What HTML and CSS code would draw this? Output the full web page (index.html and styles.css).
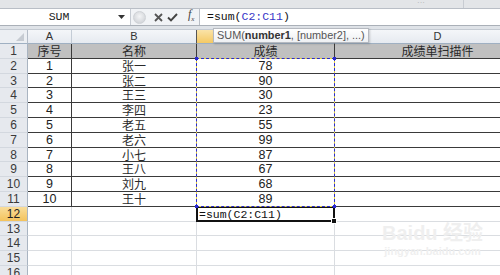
FILE: index.html
```html
<!DOCTYPE html>
<html>
<head>
<meta charset="utf-8">
<link rel="stylesheet" href="styles.css">
</head>
<body>
<div class="app">
  <div class="ribbon-edge"><span class="dots">···</span><span class="vline"></span></div>
  <div class="fbar">
    <div class="namebox">SUM</div>
    <div class="nb-arrow"><svg width="7" height="4" viewBox="0 0 7 4"><path d="M0 0h7L3.5 4z" fill="#333"/></svg></div>
    <div class="fbtns">
      <span class="circ"></span>
      <svg class="ico" width="9" height="9" viewBox="0 0 9 9"><path d="M1 1l7 7M8 1L1 8" stroke="#555" stroke-width="1.8"/></svg>
      <svg class="ico" width="11" height="9" viewBox="0 0 11 9"><path d="M1 4.5l3 3L10 1" stroke="#444" stroke-width="1.9" fill="none"/></svg>
      <span class="fx">f<sub>x</sub></span>
    </div>
    <div class="finput">=sum(<span class="ref">C2:C11</span>)</div>
  </div>
  <div class="gap"></div>
  <div class="sheet">
    <div class="corner"><span class="tri"></span></div>
    <div class="ch">A</div>
    <div class="ch">B</div>
    <div class="ch sel"></div>
    <div class="ch">D</div>

    <div class="rh">1</div>
    <div class="c hd cjk">序号</div>
    <div class="c hd cjk">名称</div>
    <div class="c hd cjk">成绩</div>
    <div class="c hd cjk">成绩单扫描件</div>

    <div class="rh">2</div><div class="c d">1</div><div class="c d cjk">张一</div><div class="c d">78</div><div class="c d"></div>
    <div class="rh">3</div><div class="c d">2</div><div class="c d cjk">张二</div><div class="c d">90</div><div class="c d"></div>
    <div class="rh">4</div><div class="c d">3</div><div class="c d cjk">王三</div><div class="c d">30</div><div class="c d"></div>
    <div class="rh">5</div><div class="c d">4</div><div class="c d cjk">李四</div><div class="c d">23</div><div class="c d"></div>
    <div class="rh">6</div><div class="c d">5</div><div class="c d cjk">老五</div><div class="c d">55</div><div class="c d"></div>
    <div class="rh">7</div><div class="c d">6</div><div class="c d cjk">老六</div><div class="c d">99</div><div class="c d"></div>
    <div class="rh">8</div><div class="c d">7</div><div class="c d cjk">小七</div><div class="c d">87</div><div class="c d"></div>
    <div class="rh">9</div><div class="c d">8</div><div class="c d cjk">王八</div><div class="c d">67</div><div class="c d"></div>
    <div class="rh">10</div><div class="c d">9</div><div class="c d cjk">刘九</div><div class="c d">68</div><div class="c d"></div>
    <div class="rh">11</div><div class="c d">10</div><div class="c d cjk">王十</div><div class="c d">89</div><div class="c d"></div>

    <div class="rh sel">12</div><div class="c e"></div><div class="c e"></div><div class="c e active">=sum(C2:C11)<span class="handle"></span></div><div class="c e"></div>
    <div class="rh">13</div><div class="c e"></div><div class="c e"></div><div class="c e"></div><div class="c e"></div>
    <div class="rh">14</div><div class="c e"></div><div class="c e"></div><div class="c e"></div><div class="c e"></div>
    <div class="rh">15</div><div class="c e"></div><div class="c e"></div><div class="c e"></div><div class="c e"></div>
    <div class="rh">16</div><div class="c e"></div><div class="c e"></div><div class="c e"></div><div class="c e"></div>

    <div class="marquee"><div class="ants"></div><span class="knob k1"></span><span class="knob k2"></span><span class="knob k3"></span><span class="knob k4"></span></div>
  </div>

  <div class="tooltip">SUM(<b>number1</b>, [number2], ...)</div>
  <div class="watermark"><div class="wm1">Bai<span class="paw">du</span> 经验</div><div class="wm2">jingyan.baidu.com</div></div>
</div>
</body>
</html>
```
FILE: styles.css
```css
html, body {
  margin: 0;
  padding: 0;
  background: #fff;
}
.app {
  position: relative;
  width: 500px;
  height: 275px;
  overflow: hidden;
  font-family: "Liberation Sans", Arial, sans-serif;
  color: #222;
}
.ribbon-edge {
  height: 8px;
  background: #e3e5e8;
  border-bottom: 1px solid #b9bec6;
  display: flex;
  justify-content: flex-end;
  align-items: flex-start;
  overflow: hidden;
}
.ribbon-edge .dots {
  font-size: 8px;
  line-height: 6px;
  color: #b0b0b0;
  margin-right: 38px;
}
.ribbon-edge .vline {
  width: 1px;
  height: 8px;
  background: #c8ccd2;
  margin-right: 36px;
}
.fbar {
  height: 16px;
  display: flex;
  align-items: stretch;
  background: #f1f3f6;
  border-bottom: 1px solid #aab0b8;
}
.namebox {
  width: 118px;
  background: #fff;
  font-family: "Liberation Mono", monospace;
  font-size: 11.5px;
  line-height: 16px;
  text-align: center;
  color: #222;
}
.nb-arrow {
  width: 12px;
  background: #fff;
  display: flex;
  align-items: center;
  justify-content: flex-start;
  border-right: 1px solid #c6cbd2;
}
.fbtns {
  width: 66px;
  display: flex;
  align-items: center;
  padding-left: 2px;
}
.circ {
  width: 11px;
  height: 11px;
  border-radius: 50%;
  background: radial-gradient(circle at 50% 40%, #f3f4f6, #c9ccd1);
  border: 1px solid #cfd2d6;
  margin-right: 8px;
}
.ico {
  margin-right: 4px;
}
.fx {
  font-family: "Liberation Serif", serif;
  font-style: italic;
  font-size: 12px;
  color: #444;
  margin-left: 6px;
  line-height: 12px;
}
.fx sub {
  font-size: 7px;
}
.finput {
  flex: 1;
  background: #fff;
  border-left: 1px solid #b9bec6;
  font-family: "Liberation Mono", monospace;
  font-size: 11.5px;
  line-height: 16px;
  padding-left: 7px;
  color: #111;
}
.finput .ref {
  color: #3535c8;
}
.gap {
  height: 3px;
  background: #dfe3e8;
  border-bottom: 1px solid #c4cad2;
}
.sheet {
  position: relative;
  display: grid;
  grid-template-columns: 28px 44px 125px 138px 206px;
  grid-template-rows: 14px repeat(16, 14.8px);
}
.corner {
  background: #eceff3;
  border-right: 1px solid #b4bcc7;
  border-bottom: 1px solid #9fb0c2;
  display: flex;
  align-items: flex-end;
  justify-content: flex-end;
}
.corner .tri {
  width: 0;
  height: 0;
  border-left: 8px solid transparent;
  border-bottom: 8px solid #c6cbd2;
  margin: 0 3px 2px 0;
}
.ch {
  background: linear-gradient(#f4f6f9, #e6eaf0);
  border-right: 1px solid #c4ccd6;
  border-bottom: 1px solid #9fb0c2;
  font-size: 11px;
  line-height: 13px;
  text-align: center;
  color: #333;
}
.ch.sel {
  background: linear-gradient(#fae3a8, #f4c964);
  border-left: 1px solid #555;
  border-right: 1px solid #555;
  margin-left: -1px;
}
.rh {
  background: #e6e9ee;
  border-right: 1px solid #a9b4c1;
  border-bottom: 1px solid #d3d8df;
  font-size: 12px;
  line-height: 14px;
  text-align: center;
  color: #3a3a3a;
  overflow: hidden;
}
.rh.sel {
  background: linear-gradient(#f9dd9a, #f4c35c);
  color: #222;
}
.c {
  white-space: nowrap;
  text-align: center;
  font-size: 12.5px;
  line-height: 14px;
  color: #222;
}
.cjk {
  font-family: "Noto Sans CJK SC", sans-serif;
  font-size: 12px;
  font-weight: 400;
  line-height: 14px;
  color: #2a2a2a;
}
.hd {
  background: #c0c0c0;
  border-right: 1px solid #3a3a3a;
  border-bottom: 1px solid #3a3a3a;
}
.d {
  border-right: 1px solid #3a3a3a;
  border-bottom: 1px solid #3a3a3a;
}
.e {
  border-right: 1px solid #dadde1;
  border-bottom: 1px solid #dadde1;
}
.active {
  position: relative;
  text-align: left;
  font-family: "Liberation Mono", monospace;
  font-size: 11.5px;
  line-height: 13px;
  padding-left: 1px;
  margin: -1px 0 0 -1px;
  border: 2px solid #111;
  color: #111;
}
.active .handle {
  position: absolute;
  right: -4px;
  bottom: -4px;
  width: 4px;
  height: 4px;
  background: #111;
  border: 1px solid #fff;
}
.marquee {
  position: absolute;
  grid-column: 4 / 5;
  grid-row: 3 / 13;
  top: -1px;
  left: -1px;
  right: 0;
  bottom: 0;
  border: 1px solid #e8d83a;
  pointer-events: none;
}
.marquee .ants {
  position: absolute;
  inset: -1px;
  border: 1px dashed #2a2ad0;
}
.marquee .knob {
  position: absolute;
  width: 3px;
  height: 3px;
  background: #2a2ad0;
}
.k1 { left: -2px; top: -2px; }
.k2 { right: -2px; top: -2px; }
.k3 { left: -2px; bottom: -2px; }
.k4 { right: -2px; bottom: -2px; }
.tooltip {
  position: absolute;
  left: 213px;
  top: 28px;
  width: 151px;
  height: 13px;
  padding-left: 3px;
  background: linear-gradient(#ffffff, #eef0f3);
  border: 1px solid #b5b9c0;
  box-shadow: 1px 1px 2px rgba(0,0,0,0.18);
  font-family: "Liberation Sans", Arial, sans-serif;
  font-size: 10.9px;
  line-height: 13px;
  color: #555;
  white-space: nowrap;
}
.tooltip b {
  color: #333;
}
.watermark {
  position: absolute;
  left: 382px;
  top: 222px;
  color: #efefef;
  text-align: center;
}
.wm1 {
  font-size: 20px;
  font-weight: bold;
  line-height: 22px;
  font-family: "Liberation Sans", "Noto Sans CJK SC", sans-serif;
}
.wm2 {
  font-family: "Liberation Sans", Arial, sans-serif;
  font-size: 11px;
  line-height: 14px;
  font-weight: bold;
}
```
